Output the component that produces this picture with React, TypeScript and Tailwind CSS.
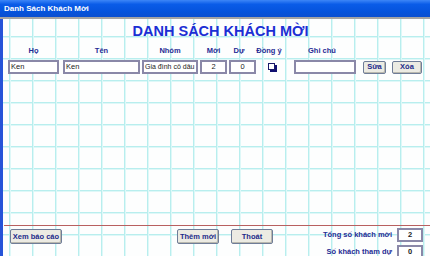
import React from 'react';

const font = "font-['Liberation_Sans',Arial,sans-serif]";

const Field = ({ value = '', className = '', center = false }: { value?: string; className?: string; center?: boolean }) => (
  <div
    className={`h-[14px] overflow-hidden whitespace-nowrap border-2 border-[#8a88a8] bg-white px-[1px] text-[7.5px] leading-[10px] text-[#222] ${center ? 'text-center' : ''} ${className}`}
  >
    {value}
  </div>
);

const Button = ({ label, className = '' }: { label: string; className?: string }) => (
  <div
    className={`flex items-center justify-center rounded-[2px] border border-[#6f7d98] bg-[#ecebe3] text-[7.5px] font-bold text-[#1d2a8a] shadow-[inset_-1px_-1px_0_#b9b8ae] ${className}`}
  >
    {label}
  </div>
);

export default function App() {
  return (
    <div className={`flex h-[256px] w-[430px] flex-col overflow-hidden bg-white ${font}`}>
      {/* title bar */}
      <div className="flex h-[17px] items-center bg-[linear-gradient(to_bottom,#3d86f7_0%,#0a5ce8_25%,#0553dc_70%,#0a4fd0_100%)] pl-[4px]">
        <span className="text-[8px] font-bold text-white">Danh Sách Khách Mời</span>
      </div>
      <div className="h-[2px] bg-[#a4a4a4]" />

      <div className="flex flex-1 flex-col border-l-[3px] border-[#2553d8] bg-[#fdfefe] bg-[linear-gradient(to_right,#b8eeee_1px,#def8f8_1px,#def8f8_2px,transparent_2px),linear-gradient(to_bottom,#b8eeee_1px,#def8f8_1px,#def8f8_2px,transparent_2px)] bg-[size:23px_22px] bg-[position:6px_17px]">
        <div className="ml-[8px] mt-[3px] text-center text-[14.5px] font-bold leading-[18px] text-[#1c2fd4]">
          DANH SÁCH KHÁCH MỜI
        </div>

        {/* column headers */}
        <div className="mt-[6px] flex h-[10px] items-center text-[7.5px] font-bold text-[#262b94]">
          <div className="ml-[5px] w-[51px] text-center">Họ</div>
          <div className="ml-[4px] w-[77px] text-center">Tên</div>
          <div className="ml-[2px] w-[56px] text-center">Nhóm</div>
          <div className="ml-[2px] w-[27px] text-center">Mời</div>
          <div className="ml-[2px] w-[20px] text-center">Dự</div>
          <div className="ml-[2px] w-[36px] text-center">Đồng ý</div>
          <div className="ml-[4px] w-[62px] text-center">Ghi chú</div>
        </div>

        {/* guest row */}
        <div className="mt-[4px] flex items-center">
          <Field value="Ken" className="ml-[5px] w-[51px]" />
          <Field value="Ken" className="ml-[4px] w-[77px]" />
          <Field value="Gia đình cô dâu" className="ml-[2px] w-[56px] text-[7px]" />
          <Field value="2" center className="ml-[2px] w-[27px]" />
          <Field value="0" center className="ml-[2px] w-[27px]" />
          <div className="ml-[12px] mb-[2px] h-[7px] w-[7px] border border-[#1a1a6a] bg-white shadow-[2px_2px_0_#101070]" />
          <Field className="ml-[19px] w-[62px]" />
          <Button label="Sửa" className="ml-[7px] h-[13px] w-[23px]" />
          <Button label="Xóa" className="ml-[6px] h-[13px] w-[30px]" />
        </div>

        <div className="flex-1" />

        <div className="ml-[1px] h-px bg-[#b86060]" />

        {/* footer */}
        <div className="flex h-[30px] items-start">
          <Button label="Xem báo cáo" className="ml-[7px] mt-[3px] h-[15px] w-[52px]" />
          <Button label="Thêm mới" className="ml-[115px] mt-[3px] h-[15px] w-[42px]" />
          <Button label="Thoát" className="ml-[12px] mt-[3px] h-[15px] w-[42px]" />
          <div className="ml-auto mr-[7px] mt-[2px] flex flex-col items-end gap-[3px]">
            <div className="flex items-center gap-[5px]">
              <span className="text-[7.5px] font-bold text-[#262b94]">Tổng số khách mời</span>
              <Field value="2" center className="h-[12px] w-[26px] font-bold leading-[8px]" />
            </div>
            <div className="flex items-center gap-[5px]">
              <span className="text-[7.5px] font-bold text-[#262b94]">Số khách tham dự</span>
              <Field value="0" center className="h-[12px] w-[26px] font-bold leading-[8px]" />
            </div>
          </div>
        </div>
      </div>
    </div>
  );
}
